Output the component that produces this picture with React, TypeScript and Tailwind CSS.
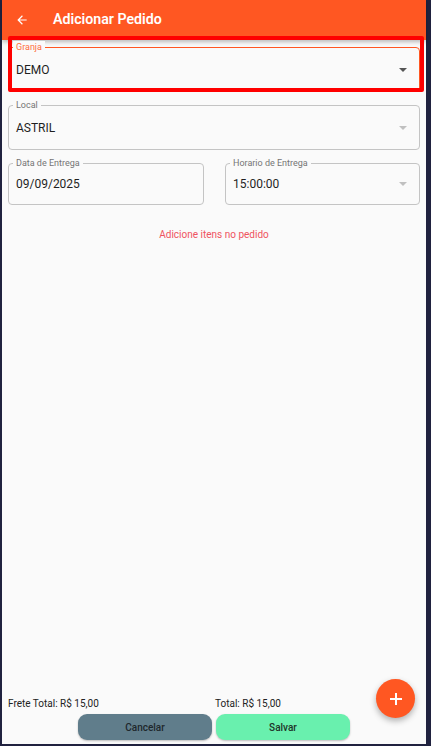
import React from 'react';

const Caret: React.FC<{ className?: string }> = ({ className }) => (
  <svg width="8" height="4" viewBox="0 0 8 4" className={className}>
    <path d="M0 0 L8 0 L4 4 Z" fill="currentColor" />
  </svg>
);

interface FieldProps {
  label: string;
  value: string;
  height: string;
  caret?: 'dark' | 'light';
  focused?: boolean;
  className?: string;
}

const Field: React.FC<FieldProps> = ({ label, value, height, caret, focused, className }) => (
  <div
    className={`relative flex items-center rounded-[4px] border ${
      focused ? 'border-[#ff5722]' : 'border-[#c4c4c4]'
    } ${height} ${className ?? ''}`}
  >
    <span
      className={`absolute -top-[7px] left-[4px] bg-[#fafafa] px-[3px] text-[9px] leading-[12px] ${
        focused ? 'text-[#ff6e40]' : 'text-[#757575]'
      }`}
    >
      {label}
    </span>
    <span className="flex-1 pl-[7px] text-[12px] text-[#1f1f1f]">{value}</span>
    {caret && (
      <Caret className={`mr-[12px] ${caret === 'dark' ? 'text-[#555555]' : 'text-[#c0c0c0]'}`} />
    )}
  </div>
);

export default function App() {
  return (
    <div className="h-[746px] w-[431px] bg-[#20223f] pb-[2px] pl-[2px] pr-[5px] font-['Roboto',sans-serif]">
      <div className="relative flex h-full flex-col bg-[#fafafa]">
        <header className="flex h-[40px] items-center bg-[#ff5722] shadow-[0_2px_4px_rgba(0,0,0,0.25)]">
          <svg width="14" height="14" viewBox="0 0 24 24" className="ml-[13px] text-white">
            <path d="M20 11H7.83l5.59-5.59L12 4l-8 8 8 8 1.41-1.41L7.83 13H20v-2z" fill="currentColor" />
          </svg>
          <h1 className="ml-[24px] text-[14.2px] font-semibold text-white">Adicionar Pedido</h1>
        </header>

        <div className="flex flex-col gap-[13px] px-[6px] pt-[7px]">
          <Field label="Granja" value="DEMO" height="h-[45px]" caret="dark" focused />
          <Field label="Local" value="ASTRIL" height="h-[45px]" caret="light" />
          <div className="flex gap-[21px]">
            <Field label="Data de Entrega" value="09/09/2025" height="h-[42px]" className="w-[196px]" />
            <Field label="Horario de Entrega" value="15:00:00" height="h-[42px]" caret="light" className="flex-1" />
          </div>
        </div>

        <p className="mt-[22px] text-center text-[10px] text-[#ef5360]">Adicione itens no pedido</p>

        <div className="flex-1" />

        <div className="grid grid-cols-2 px-[6px] text-[10px] text-[#222222]">
          <span>Frete Total: R$ 15,00</span>
          <span className="pl-[1px]">Total: R$ 15,00</span>
        </div>
        <div className="mb-[4px] mt-[3px] flex justify-center gap-[4px]">
          <button className="h-[26px] w-[134px] rounded-[9px] bg-[#607d8b] text-[10px] font-medium text-[#1e272c] shadow-[0_1px_2px_rgba(0,0,0,0.25)]">
            Cancelar
          </button>
          <button className="h-[26px] w-[134px] rounded-[9px] bg-[#69f0ae] text-[10px] font-medium text-[#1e3329] shadow-[0_1px_2px_rgba(0,0,0,0.25)]">
            Salvar
          </button>
        </div>

        <button className="absolute bottom-[26px] right-[11px] flex h-[39px] w-[39px] items-center justify-center rounded-full bg-[#ff5722] shadow-[0_3px_6px_rgba(0,0,0,0.3)]">
          <svg width="14" height="14" viewBox="0 0 14 14">
            <path d="M7 1v12M1 7h12" stroke="white" strokeWidth="2" />
          </svg>
        </button>

        <div className="pointer-events-none absolute left-[6px] top-[36px] h-[56px] w-[416px] rounded-[2px] border-4 border-[#ff0000]" />
      </div>
    </div>
  );
}
